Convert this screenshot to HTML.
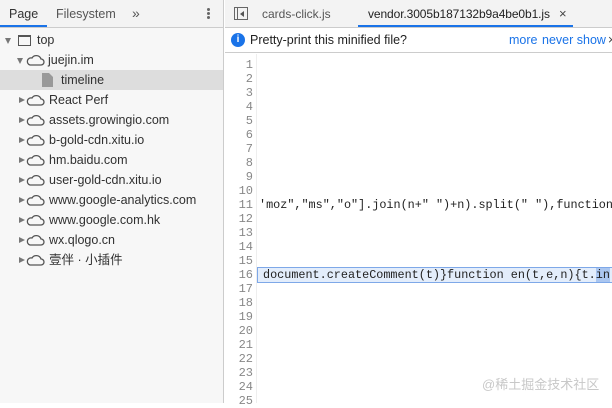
<!DOCTYPE html>
<html><head><meta charset="utf-8"><style>
*{margin:0;padding:0;box-sizing:border-box}
body{width:612px;height:403px;overflow:hidden;font-family:"Liberation Sans","Noto Sans CJK SC",sans-serif;font-size:12px;color:#333;position:relative;background:#fff}
#left{position:absolute;left:0;top:0;width:224px;height:403px;background:#f7f7f7;border-right:1px solid #ccc}
#lt{height:28px;background:#f3f3f3;border-bottom:1px solid #ccc;position:relative}
#lt span{position:absolute;top:7px;font-size:12.5px;color:#333}
.row{position:absolute;left:0;width:223px;height:20px;line-height:20px;font-size:12.5px;color:#303030}
.tri{position:absolute;top:7px;width:0;height:0;border-left:6px solid #777;border-top:3.5px solid transparent;border-bottom:3.5px solid transparent}
.tri.d{border-top:6px solid #777;border-left:3.5px solid transparent;border-right:3.5px solid transparent;border-bottom:0;top:8px}
.ic{position:absolute;top:4px}
.tx{position:absolute}
#rt{position:absolute;left:225px;top:0;right:0;height:28px;background:#f3f3f3;border-bottom:1px solid #ccc}
#info{position:absolute;left:225px;top:28px;right:0;height:25px;background:#fff;border-bottom:1px solid #ccc}
.ln{position:absolute;left:225px;width:28px;text-align:right;font-family:"Liberation Mono",monospace;font-size:12px;color:#888;line-height:14px}
.code{position:absolute;left:259px;font-family:"Liberation Mono",monospace;font-size:11.8px;color:#222;line-height:14px;white-space:pre}
#gut{position:absolute;left:225px;top:54px;width:32px;height:349px;background:#fff;border-right:1px solid #eee}
</style></head><body>
<div id="left">
<div id="lt">
<span style="left:9px">Page</span>
<span style="left:56px;color:#555">Filesystem</span>
<span style="left:132px;color:#555;font-size:14px;top:5px">»</span>
<div style="position:absolute;left:0;top:25px;width:47px;height:2px;background:#1a73e8"></div>
<div style="position:absolute;left:207px;top:8px;width:3px;height:3px;background:#666;border-radius:50%;box-shadow:0 4px 0 #666,0 8px 0 #666"></div>
</div>
</div>
<div class="row" style="top:30px"><div class="tri d" style="left:5px"></div>
<div style="position:absolute;left:18px;top:5px;width:13px;height:11px;border:1.5px solid #555;border-top-width:2.5px"></div><span class="tx" style="left:37px">top</span></div>
<div class="row" style="top:50px"><div class="tri d" style="left:17px"></div>
<svg class="ic" style="left:26px" width="19" height="12" viewBox="0 0 19 12"><path d="M4 11h11a3 3 0 0 0 0-6 5 5 0 0 0-9-1 3.5 3.5 0 0 0-2 7z" fill="none" stroke="#555" stroke-width="1.3"/></svg><span class="tx" style="left:48px">juejin.im</span></div>
<div class="row" style="top:70px;background:#ddd"><svg class="ic" style="left:42px;top:3px" width="11" height="14" viewBox="0 0 11 14"><path d="M0 0h7l4 4v10H0z" fill="#999"/></svg><span class="tx" style="left:61px">timeline</span></div>
<div class="row" style="top:90px"><div class="tri" style="left:19px"></div><svg class="ic" style="left:26px" width="19" height="12" viewBox="0 0 19 12"><path d="M4 11h11a3 3 0 0 0 0-6 5 5 0 0 0-9-1 3.5 3.5 0 0 0-2 7z" fill="none" stroke="#555" stroke-width="1.3"/></svg><span class="tx" style="left:49px">React Perf</span></div>
<div class="row" style="top:110px"><div class="tri" style="left:19px"></div><svg class="ic" style="left:26px" width="19" height="12" viewBox="0 0 19 12"><path d="M4 11h11a3 3 0 0 0 0-6 5 5 0 0 0-9-1 3.5 3.5 0 0 0-2 7z" fill="none" stroke="#555" stroke-width="1.3"/></svg><span class="tx" style="left:49px">assets.growingio.com</span></div>
<div class="row" style="top:130px"><div class="tri" style="left:19px"></div><svg class="ic" style="left:26px" width="19" height="12" viewBox="0 0 19 12"><path d="M4 11h11a3 3 0 0 0 0-6 5 5 0 0 0-9-1 3.5 3.5 0 0 0-2 7z" fill="none" stroke="#555" stroke-width="1.3"/></svg><span class="tx" style="left:49px">b-gold-cdn.xitu.io</span></div>
<div class="row" style="top:150px"><div class="tri" style="left:19px"></div><svg class="ic" style="left:26px" width="19" height="12" viewBox="0 0 19 12"><path d="M4 11h11a3 3 0 0 0 0-6 5 5 0 0 0-9-1 3.5 3.5 0 0 0-2 7z" fill="none" stroke="#555" stroke-width="1.3"/></svg><span class="tx" style="left:49px">hm.baidu.com</span></div>
<div class="row" style="top:170px"><div class="tri" style="left:19px"></div><svg class="ic" style="left:26px" width="19" height="12" viewBox="0 0 19 12"><path d="M4 11h11a3 3 0 0 0 0-6 5 5 0 0 0-9-1 3.5 3.5 0 0 0-2 7z" fill="none" stroke="#555" stroke-width="1.3"/></svg><span class="tx" style="left:49px">user-gold-cdn.xitu.io</span></div>
<div class="row" style="top:190px"><div class="tri" style="left:19px"></div><svg class="ic" style="left:26px" width="19" height="12" viewBox="0 0 19 12"><path d="M4 11h11a3 3 0 0 0 0-6 5 5 0 0 0-9-1 3.5 3.5 0 0 0-2 7z" fill="none" stroke="#555" stroke-width="1.3"/></svg><span class="tx" style="left:49px">www.google-analytics.com</span></div>
<div class="row" style="top:210px"><div class="tri" style="left:19px"></div><svg class="ic" style="left:26px" width="19" height="12" viewBox="0 0 19 12"><path d="M4 11h11a3 3 0 0 0 0-6 5 5 0 0 0-9-1 3.5 3.5 0 0 0-2 7z" fill="none" stroke="#555" stroke-width="1.3"/></svg><span class="tx" style="left:49px">www.google.com.hk</span></div>
<div class="row" style="top:230px"><div class="tri" style="left:19px"></div><svg class="ic" style="left:26px" width="19" height="12" viewBox="0 0 19 12"><path d="M4 11h11a3 3 0 0 0 0-6 5 5 0 0 0-9-1 3.5 3.5 0 0 0-2 7z" fill="none" stroke="#555" stroke-width="1.3"/></svg><span class="tx" style="left:49px">wx.qlogo.cn</span></div>
<div class="row" style="top:250px"><div class="tri" style="left:19px"></div><svg class="ic" style="left:26px" width="19" height="12" viewBox="0 0 19 12"><path d="M4 11h11a3 3 0 0 0 0-6 5 5 0 0 0-9-1 3.5 3.5 0 0 0-2 7z" fill="none" stroke="#555" stroke-width="1.3"/></svg><span class="tx" style="left:49px">壹伴 · 小插件</span></div>

<div id="rt">
<div style="position:absolute;left:9px;top:7px;width:14px;height:13px;border:1px solid #666"><div style="position:absolute;left:2px;top:0;width:1px;height:11px;background:#666"></div><div style="position:absolute;left:5px;top:3px;border-right:4px solid #555;border-top:3px solid transparent;border-bottom:3px solid transparent"></div></div>
<span style="position:absolute;left:37px;top:7px;color:#555;font-size:12px">cards-click.js</span>
<span style="position:absolute;left:143px;top:7px;color:#222;font-size:12px;letter-spacing:-0.1px">vendor.3005b187132b9a4be0b1.js</span>
<span style="position:absolute;left:334px;top:6px;color:#444;font-size:13px">×</span>
<div style="position:absolute;left:133px;top:25px;width:215px;height:2px;background:#1a73e8"></div>
</div>
<div id="info">
<div style="position:absolute;left:6px;top:5px;width:14px;height:14px;border-radius:50%;background:#1a73e8;color:#fff;font-size:10px;font-weight:bold;text-align:center;line-height:14px">i</div>
<span style="position:absolute;left:25px;top:5px;font-size:12.5px;color:#222">Pretty-print this minified file?</span>
<span style="position:absolute;left:284px;top:5px;font-size:12.5px;color:#1a73e8">more</span>
<span style="position:absolute;left:317px;top:5px;font-size:12.5px;color:#1a73e8">never show</span>
<span style="position:absolute;left:383px;top:5px;font-size:12.5px;color:#444">×</span>
</div>
<div id="gut"></div>
<div class="ln" style="top:58px">1<br>2<br>3<br>4<br>5<br>6<br>7<br>8<br>9<br>10<br>11<br>12<br>13<br>14<br>15<br>16<br>17<br>18<br>19<br>20<br>21<br>22<br>23<br>24<br>25</div>
<div class="code" style="top:198px">'moz","ms","o"].join(n+" ")+n).split(" "),function</div>
<div style="position:absolute;left:257px;top:267px;width:360px;height:16px;background:#e3edfb;border:1px solid #7ea8e8"></div>
<div class="code" style="top:268px;left:263px">document.createComment(t)}function en(t,e,n){t.<span style="background:#aac6f0">in</span></div>
<div style="position:absolute;left:482px;top:374px;font-size:13px;color:#c8c8c8;font-family:'Liberation Sans','Noto Sans CJK SC',sans-serif">@稀土掘金技术社区</div>
</body></html>
